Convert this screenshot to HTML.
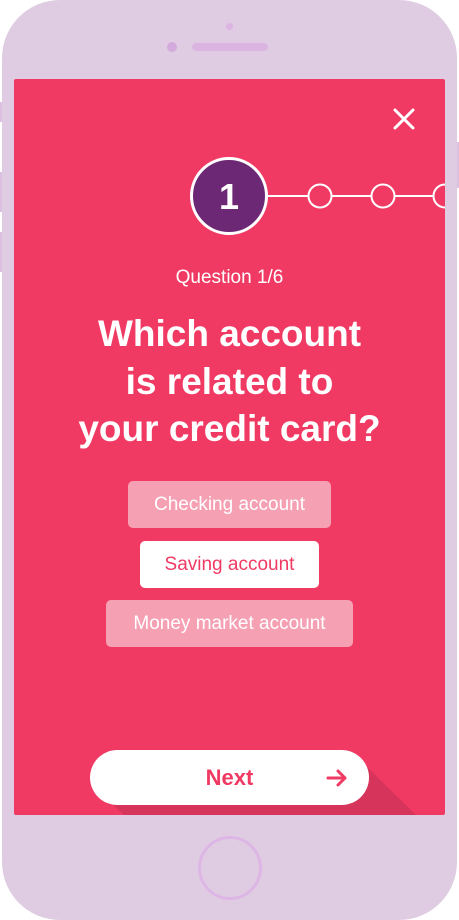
<!DOCTYPE html>
<html><head><style>
*{margin:0;padding:0;box-sizing:border-box}
body{width:459px;height:920px;background:#fff;position:relative;overflow:hidden;font-family:"Liberation Sans",sans-serif}
.phone{position:absolute;left:2px;top:0;width:455px;height:920px;background:#dfcce2;border-radius:58px}
.side{position:absolute;background:#dcc0e2;width:3px}
.screen{position:absolute;left:14px;top:79px;width:431px;height:736px;background:#f03a63;border-radius:2px;overflow:hidden}
.abs{position:absolute}
.q{position:absolute;left:0;width:431px;text-align:center;color:#fff}
.opt{position:absolute;height:47px;border-radius:5px;font-size:19px;text-align:center;line-height:47px}
</style></head><body>
<div class="side" style="left:0;top:102px;height:20px"></div>
<div class="side" style="left:0;top:172px;height:40px"></div>
<div class="side" style="left:0;top:232px;height:40px"></div>
<div class="side" style="left:456px;top:142px;height:46px"></div>
<div class="phone"></div>
<div class="abs" style="left:226px;top:23px;width:7px;height:7px;border-radius:50%;background:#dcb4e2"></div>
<div class="abs" style="left:167px;top:42px;width:10px;height:10px;border-radius:50%;background:#d3aadb"></div>
<div class="abs" style="left:192px;top:43px;width:76px;height:8px;border-radius:4px;background:#dcb4e2"></div>
<div class="abs" style="left:198px;top:836px;width:64px;height:64px;border-radius:50%;border:3px solid #ddb6e6"></div>
<div class="screen">
  <svg class="abs" style="left:0;top:0" width="431" height="736">
    <polygon points="95,722 345,680 355,690 402,736 110,736" fill="#d6345a"/>
    <path d="M381 31 L399 49 M399 31 L381 49" stroke="#fff" stroke-width="3" stroke-linecap="round"/>
    <line x1="250" y1="117" x2="431" y2="117" stroke="#fff" stroke-width="2"/>
    <circle cx="306" cy="117" r="11.5" fill="#f03a63" stroke="#fff" stroke-width="2"/>
    <circle cx="369" cy="117" r="11.5" fill="#f03a63" stroke="#fff" stroke-width="2"/>
    <circle cx="431" cy="117" r="11.5" fill="#f03a63" stroke="#fff" stroke-width="2"/>
    <circle cx="215" cy="117" r="37.5" fill="#6c2874" stroke="#fff" stroke-width="3"/>
    <text x="215" y="130" text-anchor="middle" font-family="Liberation Sans" font-weight="bold" font-size="36" fill="#fff">1</text>
  </svg>
  <div class="q" style="top:188px;font-size:19px">Question 1/6</div>
  <div class="q" style="top:231px;font-size:37px;font-weight:bold;line-height:47.5px">Which account<br>is related to<br>your credit card?</div>
  <div class="opt" style="left:114px;top:402px;width:203px;background:#f6a0b4;color:#fff">Checking account</div>
  <div class="opt" style="left:126px;top:462px;width:179px;background:#fff;color:#f03a63">Saving account</div>
  <div class="opt" style="left:92px;top:521px;width:247px;background:#f6a0b4;color:#fff">Money market account</div>
  <div class="abs" style="left:76px;top:671px;width:279px;height:55px;border-radius:28px;background:#fff;color:#f03a63;font-weight:bold;font-size:22px;text-align:center;line-height:55px">Next</div>
  <svg class="abs" style="left:310px;top:687px" width="26" height="24"><path d="M4 12 H21 M14 5 L21 12 L14 19" stroke="#f03a63" stroke-width="3" fill="none" stroke-linecap="round" stroke-linejoin="round"/></svg>
</div>
</body></html>
